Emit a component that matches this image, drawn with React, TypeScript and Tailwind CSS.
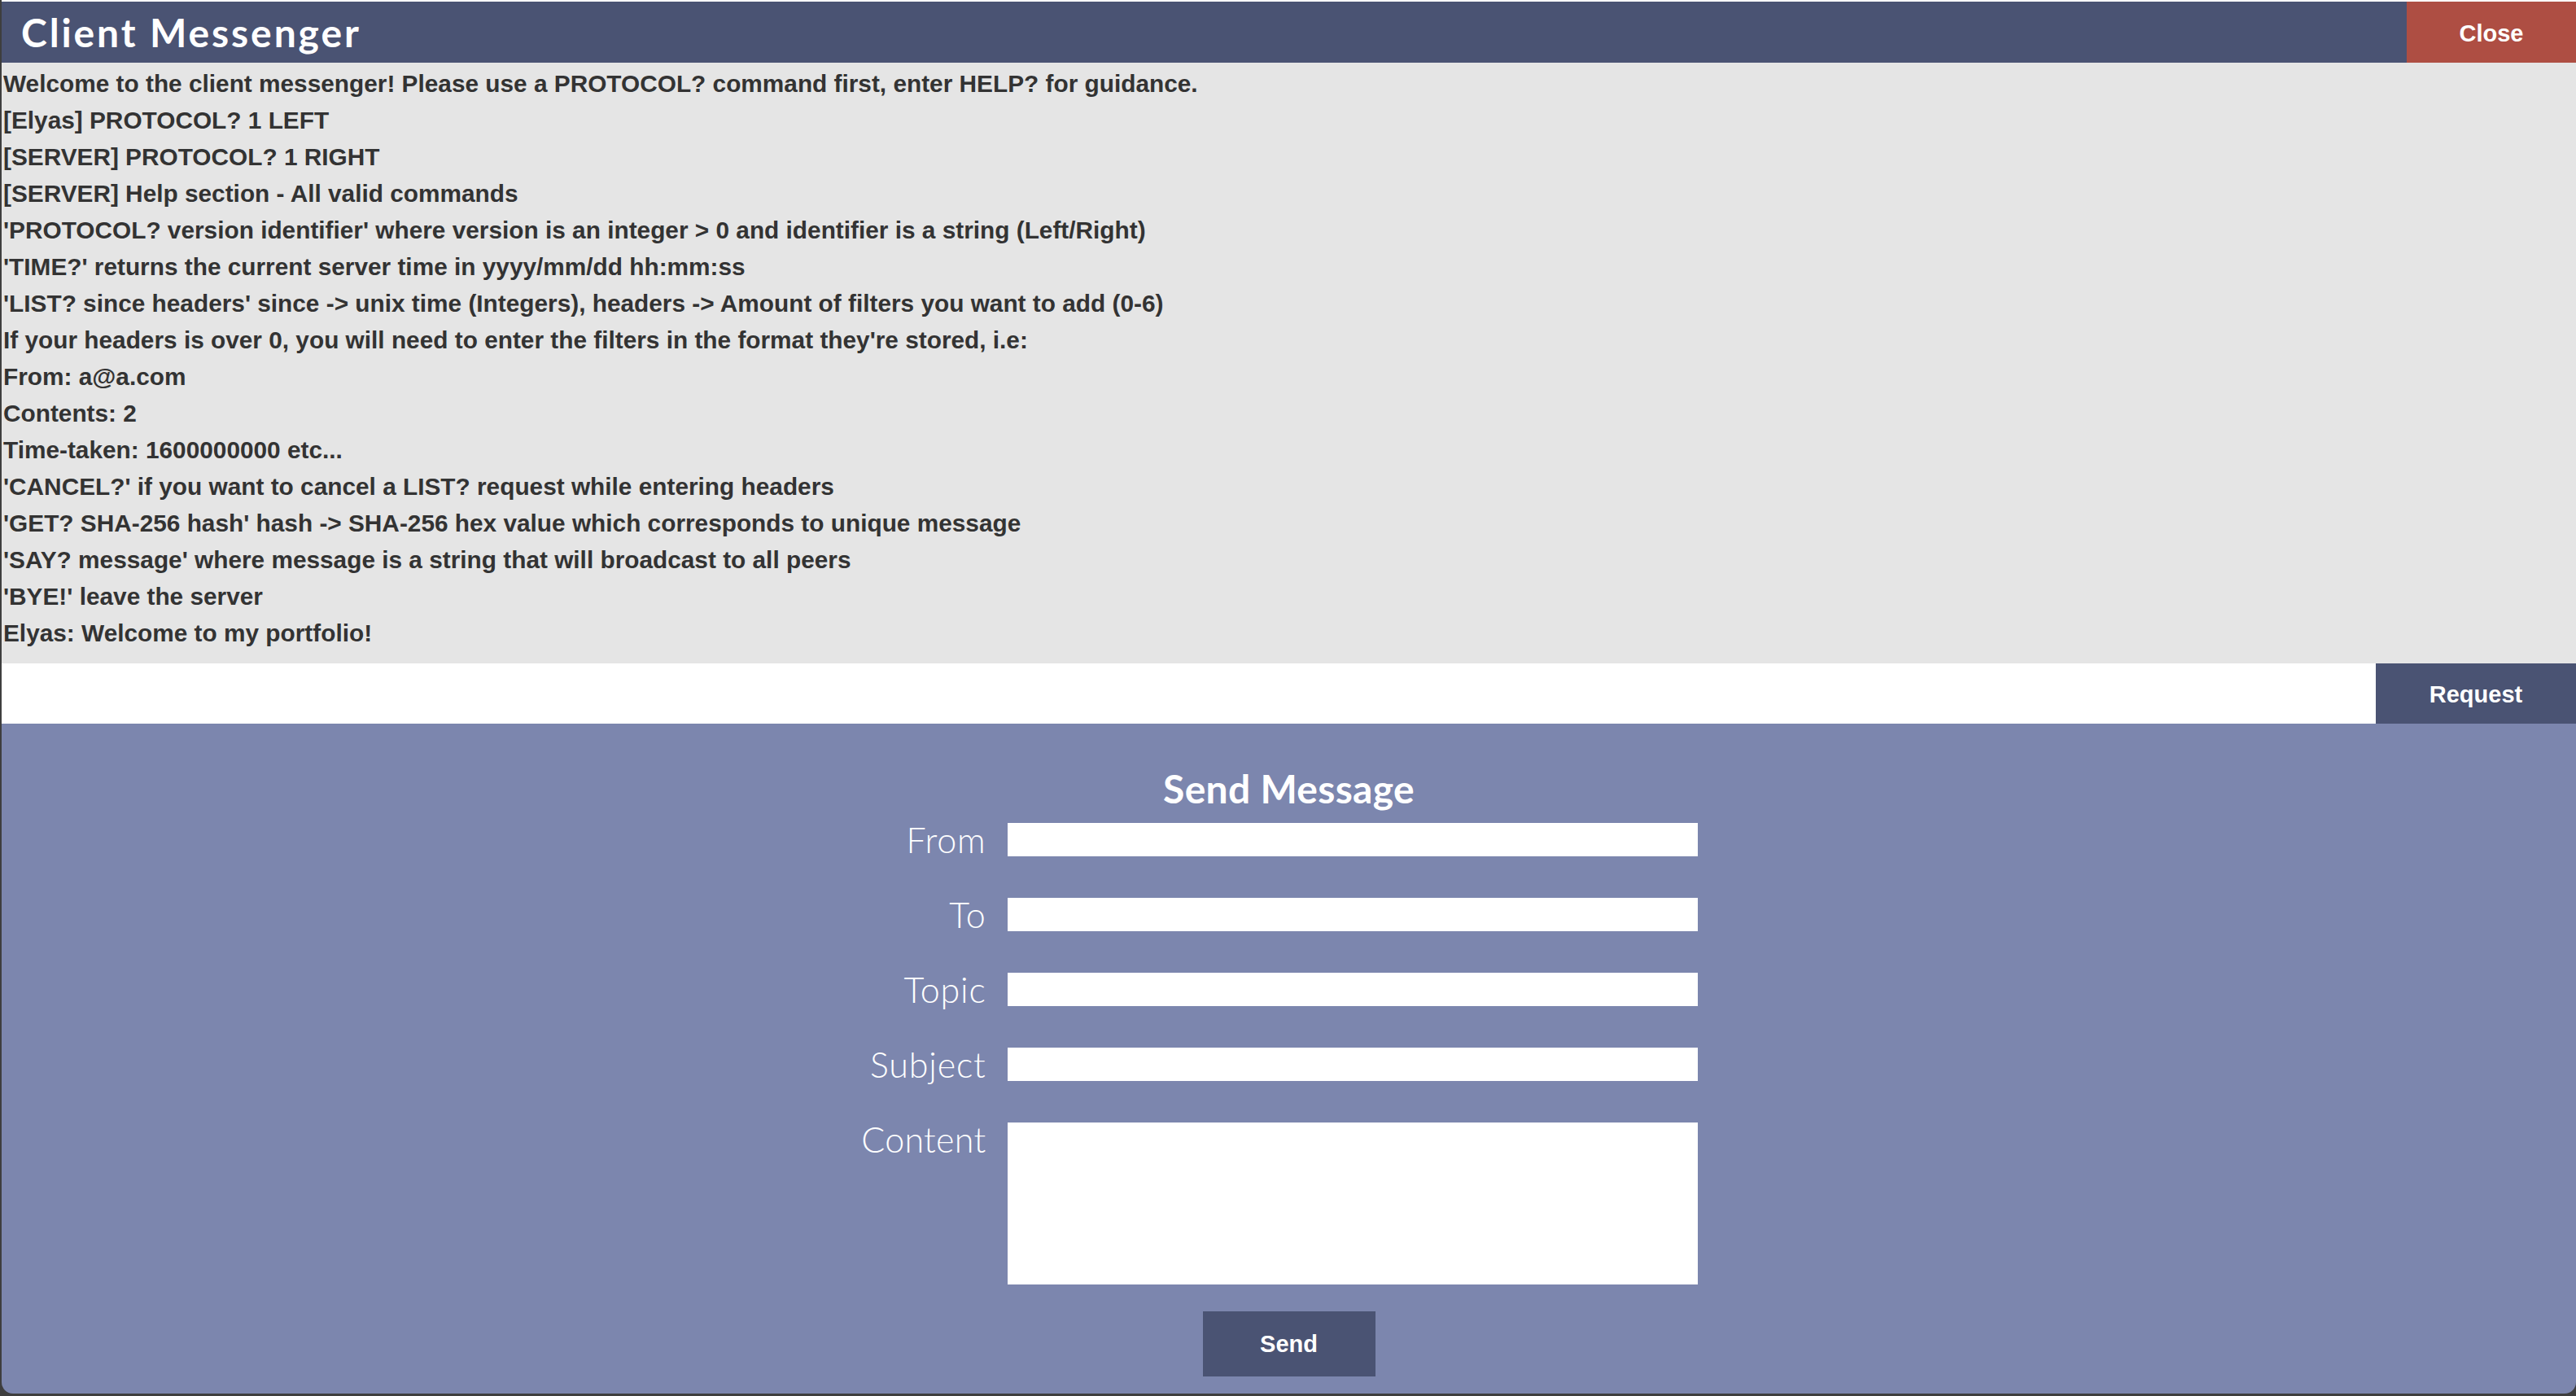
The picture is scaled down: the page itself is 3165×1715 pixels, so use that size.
import React, { useState } from "react";

const LOG_LINES: string[] = [
  "Welcome to the client messenger! Please use a PROTOCOL? command first, enter HELP? for guidance.",
  "[Elyas] PROTOCOL? 1 LEFT",
  "[SERVER] PROTOCOL? 1 RIGHT",
  "[SERVER] Help section - All valid commands",
  "'PROTOCOL? version identifier' where version is an integer > 0 and identifier is a string (Left/Right)",
  "'TIME?' returns the current server time in yyyy/mm/dd hh:mm:ss",
  "'LIST? since headers' since -> unix time (Integers), headers -> Amount of filters you want to add (0-6)",
  "If your headers is over 0, you will need to enter the filters in the format they're stored, i.e:",
  "From: a@a.com",
  "Contents: 2",
  "Time-taken: 1600000000 etc...",
  "'CANCEL?' if you want to cancel a LIST? request while entering headers",
  "'GET? SHA-256 hash' hash -> SHA-256 hex value which corresponds to unique message",
  "'SAY? message' where message is a string that will broadcast to all peers",
  "'BYE!' leave the server",
  "Elyas: Welcome to my portfolio!",
];

const FIELDS = ["From", "To", "Topic", "Subject"];

const App: React.FC = () => {
  const [command, setCommand] = useState("");
  const [form, setForm] = useState<Record<string, string>>({});

  const setField = (name: string, value: string) =>
    setForm((prev) => ({ ...prev, [name]: value }));

  return (
    <div className="h-screen flex flex-col bg-[#3e3e3e] pl-[2px] pb-[3px]">
      <div className="flex-1 flex flex-col border-t-2 border-white rounded-b-[14px] overflow-hidden bg-[#7c86ae]">
        {/* header */}
        <div className="h-[75px] flex bg-[#4a5373]">
          <h1 className="flex-1 flex items-center pl-[24px] text-white font-['Lato',sans-serif] font-bold text-[48px] tracking-[2.9px]">
            Client Messenger
          </h1>
          <button className="w-[208px] pt-[5px] bg-[#ae4e43] text-white font-['Liberation_Sans',Arial,sans-serif] font-bold text-[29px]">
            Close
          </button>
        </div>

        {/* log */}
        <div className="h-[738px] bg-[#e5e5e5] pl-[2px] pt-[3px] text-[#333] font-['Liberation_Sans',Arial,sans-serif] font-bold text-[29.8px] leading-[45px] overflow-y-auto">
          {LOG_LINES.map((line, i) => (
            <p key={i} className="whitespace-pre">
              {line}
            </p>
          ))}
        </div>

        {/* command row */}
        <div className="h-[74px] flex">
          <input
            value={command}
            onChange={(e) => setCommand(e.target.value)}
            className="flex-1 bg-white outline-none px-3 text-[28px]"
          />
          <button className="w-[246px] pt-[4px] bg-[#4a5373] text-white font-['Liberation_Sans',Arial,sans-serif] font-bold text-[29px]">
            Request
          </button>
        </div>

        {/* send message form */}
        <div className="flex-1 flex flex-col items-center pt-[52px]">
          <h2 className="text-white font-['Lato',sans-serif] font-bold text-[48px] leading-[56px] tracking-[0.3px]">
            Send Message
          </h2>

          <div className="mt-[14px] mr-[50px] grid grid-cols-[180px_848px] gap-x-[26px] gap-y-[51px] items-start">
            {FIELDS.map((name) => (
              <React.Fragment key={name}>
                <label className="text-right whitespace-nowrap text-white font-['Lato',sans-serif] font-light text-[43px] tracking-[0.8px] leading-[41px]">
                  {name}
                </label>
                <input
                  value={form[name] || ""}
                  onChange={(e) => setField(name, e.target.value)}
                  className="h-[41px] bg-white outline-none px-2 text-[24px]"
                />
              </React.Fragment>
            ))}
            <label className="text-right whitespace-nowrap text-white font-['Lato',sans-serif] font-light text-[43px] tracking-[0.3px] leading-[41px]">
              Content
            </label>
            <textarea
              value={form.Content || ""}
              onChange={(e) => setField("Content", e.target.value)}
              className="h-[199px] bg-white outline-none resize-none p-2 text-[24px]"
            />
          </div>

          <button className="mt-[33px] w-[212px] h-[80px] pt-[2px] bg-[#4a5373] text-white font-['Liberation_Sans',Arial,sans-serif] font-bold text-[29px]">
            Send
          </button>
        </div>
      </div>
    </div>
  );
};

export default App;
